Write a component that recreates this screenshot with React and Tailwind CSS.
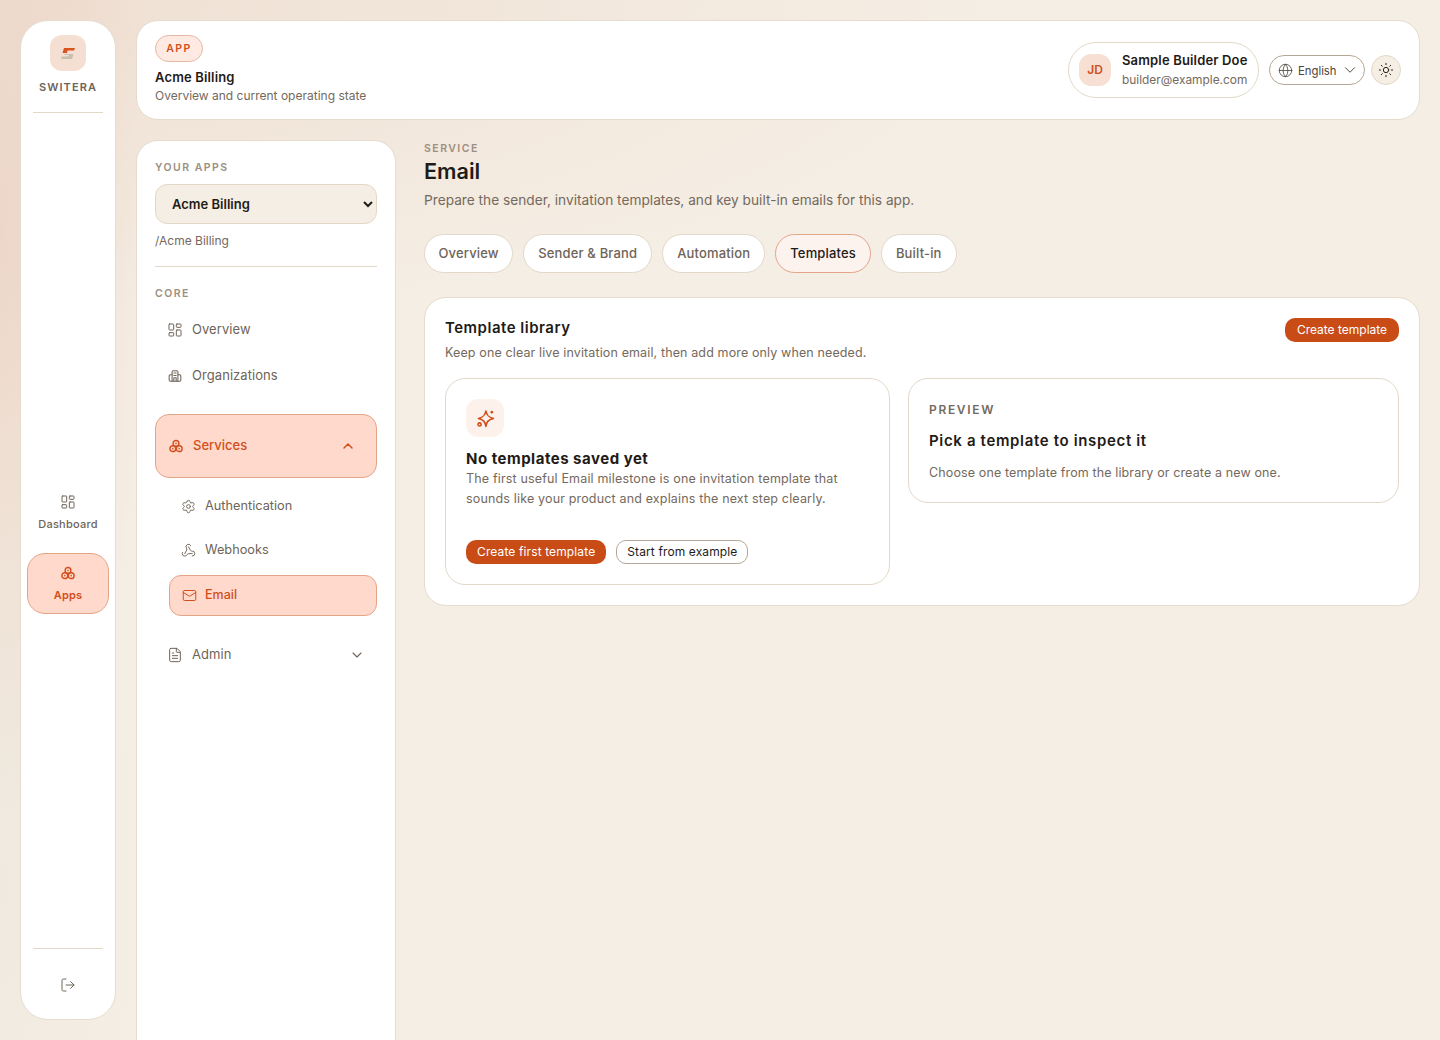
import {
  LayoutDashboard,
  Settings,
  Webhook,
  Mail,
  FileText,
  LogOut,
  Globe,
  ChevronDown,
  ChevronUp,
  Sun,
} from "lucide-react";

const ServicesIcon = ({ className }) => (
  <svg className={className} viewBox="0 0 24 24" fill="none" stroke="currentColor" strokeWidth="2.4">
    <circle cx="12" cy="7.500" r="5" />
    <circle cx="6.500" cy="16.500" r="5" />
    <circle cx="17.500" cy="16.500" r="5" />
    <circle cx="12" cy="7.500" r="1.300" fill="currentColor" stroke="none" />
    <circle cx="6.500" cy="16.500" r="1.300" fill="currentColor" stroke="none" />
    <circle cx="17.500" cy="16.500" r="1.300" fill="currentColor" stroke="none" />
  </svg>
);

const OrgIcon = ({ className }) => (
  <svg className={className} viewBox="0 0 24 24" fill="none" stroke="currentColor" strokeWidth="1.800" strokeLinejoin="round" strokeLinecap="round">
    <path d="M7 21V5a2 2 0 0 1 2-2h6a2 2 0 0 1 2 2v16" />
    <path d="M7 10H4a2 2 0 0 0-2 2v7a2 2 0 0 0 2 2h16a2 2 0 0 0 2-2v-7a2 2 0 0 0-2-2h-3" />
    <path d="M10 7h4M10 11h4M10 21v-6h4v6" />
  </svg>
);

const SparkIcon = ({ className }) => (
  <svg className={className} viewBox="0 0 24 24" fill="none" stroke="currentColor" strokeWidth="2" strokeLinejoin="round">
    <path d="M12.500 2.500C13.500 8 15.500 10.500 22 12c-6.500 1.500-8.500 4-9.500 10-1-6-3-8.500-9.500-10 6.500-1.500 8.500-4 9.500-9.500z" />
    <circle cx="20" cy="4" r="1.700" fill="currentColor" stroke="none" />
    <circle cx="4.500" cy="19.500" r="2" />
  </svg>
);

const LogoMark = () => (
  <svg className="w-[14px] h-[11px]" viewBox="0 0 14 11">
    <path d="M3 0h11l-1 2.500H6.500L6 5H1.500z" fill="#d9541e" />
    <path d="M3.500 6h9L11 11H0l1-2.500h6.500L8 7H3.500z" fill="#c9bfb0" />
  </svg>
);

const Sidebar = () => (
  <aside className="w-24 h-[1000px] shrink-0 flex flex-col items-center rounded-[28px] bg-white border border-[#e5dccd] pt-[14px] pb-[14px]">
    <div className="w-9 h-9 rounded-xl bg-[#f5dfd3] flex items-center justify-center">
      <LogoMark />
    </div>
    <div className="mt-[9px] text-[11px] leading-[14px] font-semibold tracking-[0.1em] text-[#6e6458]">SWITERA</div>
    <div className="w-[70px] border-t border-[#e3d8c8] mt-[18px]" />
    <nav className="flex-1 w-full flex flex-col items-center justify-center gap-3 pt-8">
      <div className="h-[61px] w-[82px] pt-[5px] flex flex-col items-center justify-center gap-[7px] text-[#6e6458]">
        <LayoutDashboard className="w-4 h-4" strokeWidth={1.5} />
        <span className="text-[11px] leading-[14px] font-medium tracking-[0.02em]">Dashboard</span>
      </div>
      <div className="h-[61px] w-[82px] pt-[2px] flex flex-col items-center justify-center gap-2 rounded-[18px] bg-[#ffd9cb] border border-[#e3a588] text-[#d14f1c]">
        <ServicesIcon className="w-[14px] h-[14px]" />
        <span className="text-[11px] leading-[14px] font-semibold tracking-[0.02em]">Apps</span>
      </div>
    </nav>
    <div className="w-[70px] border-t border-[#e3d8c8]" />
    <div className="h-14 flex items-center justify-center text-[#6e6458] pt-[15px]">
      <LogOut className="w-4 h-4" strokeWidth={1.5} />
    </div>
  </aside>
);

const Header = () => (
  <header className="h-[100px] shrink-0 rounded-[22px] bg-white border border-[#e5dccd] pl-[18px] pr-[18px] flex items-center justify-between">
    <div className="flex flex-col items-start">
      <span className="h-[27px] w-12 flex items-center justify-center rounded-full bg-[#feeae3] border border-[#e5b8a2] text-[10.5px] font-semibold tracking-[0.14em] text-[#d14f1c]">APP</span>
      <div className="mt-[6px] text-[13px] leading-[18px] font-semibold tracking-[0.012em] text-[#1f1b17]">Acme Billing</div>
      <div className="mt-px text-xs leading-[18px] text-[#74695d]">Overview and current operating state</div>
    </div>
    <div className="flex items-center gap-[6px]">
      <div className="h-14 w-[191px] mr-1 rounded-full border border-[#e3d8c8] flex items-center pl-[10px]">
        <div className="w-8 h-8 rounded-xl bg-[#f7dfd3] flex items-center justify-center text-xs font-semibold text-[#d14f1c]">JD</div>
        <div className="ml-[11px] mb-[2px]">
          <div className="text-[13px] leading-[18px] font-semibold tracking-[0.012em] text-[#1f1b17]">Sample Builder Doe</div>
          <div className="mt-[3px] text-[11.9px] leading-4 text-[#74695d]">builder@example.com</div>
        </div>
      </div>
      <div className="h-[30px] w-24 rounded-full border border-[#b5a796] flex items-center pl-[8px] text-[#4d453c]">
        <Globe className="w-[15px] h-[15px]" strokeWidth={1.3} />
        <span className="ml-[5px] text-[11.3px] pt-[2px]">English</span>
        <ChevronDown className="ml-[4px] w-[18px] h-[18px]" strokeWidth={1.3} />
      </div>
      <div className="w-[30px] h-[30px] rounded-full bg-[#f5eee4] border border-[#e3d8c8] flex items-center justify-center text-[#2a2520]">
        <Sun className="w-4 h-4" strokeWidth={1.5} />
      </div>
    </div>
  </header>
);

const SideLink = ({ icon: Icon, label, size = "w-4 h-4" }) => (
  <div className="h-[46px] flex items-center pl-3 text-[#6e6458]">
    <Icon className={size} strokeWidth={1.5} />
    <span className="ml-[9px] text-[13px] tracking-[0.005em]">{label}</span>
  </div>
);

const SubLink = ({ icon: Icon, label }) => (
  <div className="h-11 flex items-center pl-[26px] text-[#6e6458]">
    <Icon className="w-[15px] h-[15px]" strokeWidth={1.5} />
    <span className="ml-[9px] text-[12.750px]">{label}</span>
  </div>
);

const Panel = () => (
  <section className="w-[260px] h-[920px] shrink-0 rounded-t-[22px] bg-white border border-[#e5dccd] px-[18px] pt-5">
    <div className="text-[10.5px] leading-[13px] font-semibold tracking-[0.14em] text-[#9c8f80]">YOUR APPS</div>
    <select className="mt-[10px] w-full h-10 rounded-xl bg-[#f5eee4] border border-[#e3d8c8] pl-3 text-[13px] font-semibold text-[#1f1b17]">
      <option>Acme Billing</option>
    </select>
    <div className="mt-[9px] text-xs leading-4 text-[#74695d]">/Acme Billing</div>
    <div className="mt-[17px] border-t border-[#e3d8c8]" />
    <div className="mt-[20px] text-[10.5px] leading-[13px] font-semibold tracking-[0.14em] text-[#9c8f80]">CORE</div>
    <div className="mt-[7px]">
      <SideLink icon={LayoutDashboard} label="Overview" />
      <SideLink icon={OrgIcon} label="Organizations" size="w-[14px] h-[14px] mx-px" />
    </div>
    <div className="mt-[15px] h-16 rounded-[14px] bg-[#ffd9cb] border border-[#e3a588] flex items-center pl-[13px] pr-5 text-[#d14f1c]">
      <ServicesIcon className="w-[14px] h-[14px]" />
      <span className="ml-[10px] text-[13px] font-medium">Services</span>
      <ChevronUp className="ml-auto w-4 h-4" strokeWidth={2.2} />
    </div>
    <div className="mt-[6px]">
      <SubLink icon={Settings} label="Authentication" />
      <SubLink icon={Webhook} label="Webhooks" />
    </div>
    <div className="ml-[14px] mt-[3px] h-[41px] rounded-xl bg-[#ffd9cb] border border-[#e3a588] flex items-center pl-3 text-[#d14f1c]">
      <Mail className="w-[15px] h-[15px]" strokeWidth={1.6} />
      <span className="ml-[8px] text-[12.5px] font-medium">Email</span>
    </div>
    <div className="mt-4 h-[46px] flex items-center pl-3 pr-3 text-[#6e6458]">
      <FileText className="w-4 h-4" strokeWidth={1.5} />
      <span className="ml-[9px] text-[13px] tracking-[0.005em]">Admin</span>
      <ChevronDown className="ml-auto w-4 h-4" strokeWidth={1.6} />
    </div>
  </section>
);

const tabs = ["Overview", "Sender & Brand", "Automation", "Templates", "Built-in"];

const Main = () => (
  <main className="flex-1 min-w-0 pl-7">
    <div className="text-[10.5px] leading-[13px] mt-[2px] font-semibold tracking-[0.14em] text-[#9c8f80]">SERVICE</div>
    <h1 className="mt-px text-[21.600px] leading-[30px] font-semibold text-[#1f1b17]">Email</h1>
    <p className="mt-1 text-[13.700px] leading-5 text-[#74695d]">Prepare the sender, invitation templates, and key built-in emails for this app.</p>
    <div className="mt-6 flex gap-[10px]">
      {tabs.map((tab) => (
        <div
          key={tab}
          className={`h-[39px] flex items-center rounded-full border text-[13px] font-medium tracking-[0.012em] ${
            tab === "Overview" ? "px-[13.500px]" : "px-[14px]"
          } ${
            tab === "Templates"
              ? "bg-[#fdf3ee] border-[#e3a588] text-[#1f1b17]"
              : "bg-white border-[#e3d8c8] text-[#6e6458]"
          }`}
        >
          {tab}
        </div>
      ))}
    </div>
    <div className="mt-6 rounded-[22px] bg-white border border-[#e5dccd] p-5">
      <div className="flex items-start justify-between">
        <div>
          <h2 className="text-[15px] leading-5 font-semibold tracking-[0.5px] text-[#1f1b17]">Template library</h2>
          <p className="mt-[5px] text-[12.5px] leading-5 tracking-[0.01em] text-[#74695d]">Keep one clear live invitation email, then add more only when needed.</p>
        </div>
        <button className="h-6 w-[114px] rounded-[10px] bg-[#c94c17] text-xs text-white">Create template</button>
      </div>
      <div className="mt-[15px] flex items-start gap-[18px]">
        <div className="w-[445px] h-[207px] shrink-0 rounded-[20px] border border-[#e3d8c8] p-5">
          <div className="w-[38px] h-[38px] rounded-xl bg-[#fdf1ec] flex items-center justify-center text-[#d14f1c]">
            <SparkIcon className="w-[19px] h-[19px]" />
          </div>
          <h3 className="mt-3 text-[15px] leading-5 font-bold tracking-[0.5px] text-[#1f1b17]">No templates saved yet</h3>
          <p className="text-[12.5px] leading-5 tracking-[0.013em] text-[#74695d]">
            The first useful Email milestone is one invitation template that sounds like your product and explains the next step clearly.
          </p>
          <div className="mt-[31px] flex gap-[10px]">
            <button className="h-6 px-[11px] rounded-[10px] bg-[#c94c17] text-xs tracking-[0.01em] text-white">Create first template</button>
            <button className="h-6 px-[10px] rounded-[10px] bg-white border border-[#b5a796] text-xs tracking-[0.01em] text-[#1f1b17]">Start from example</button>
          </div>
        </div>
        <div className="flex-1 h-[125px] rounded-[20px] border border-[#e3d8c8] px-5 pt-[23px]">
          <div className="text-[12px] leading-4 font-semibold tracking-[0.14em] text-[#74695d]">PREVIEW</div>
          <h3 className="mt-[13px] text-[15px] leading-5 font-semibold tracking-[0.65px] text-[#1f1b17]">Pick a template to inspect it</h3>
          <p className="mt-[12px] text-[12.5px] leading-5 tracking-[0.01em] text-[#74695d]">Choose one template from the library or create a new one.</p>
        </div>
      </div>
    </div>
  </main>
);

export default function App() {
  return (
    <div className="h-[1040px] overflow-hidden flex gap-5 p-5 bg-[#f5eee4] bg-[radial-gradient(ellipse_150px_620px_at_0%_22%,#ecd6c8_0%,rgba(236,214,200,0)_100%),radial-gradient(ellipse_1000px_320px_at_0%_0%,#efdfd2_0%,rgba(239,223,210,0)_100%),radial-gradient(ellipse_140px_500px_at_0%_85%,#efeae0_0%,rgba(239,234,224,0)_100%)] font-['Inter',sans-serif]">
      <Sidebar />
      <div className="flex-1 min-w-0 flex flex-col gap-5">
        <Header />
        <div className="flex">
          <Panel />
          <Main />
        </div>
      </div>
    </div>
  );
}
